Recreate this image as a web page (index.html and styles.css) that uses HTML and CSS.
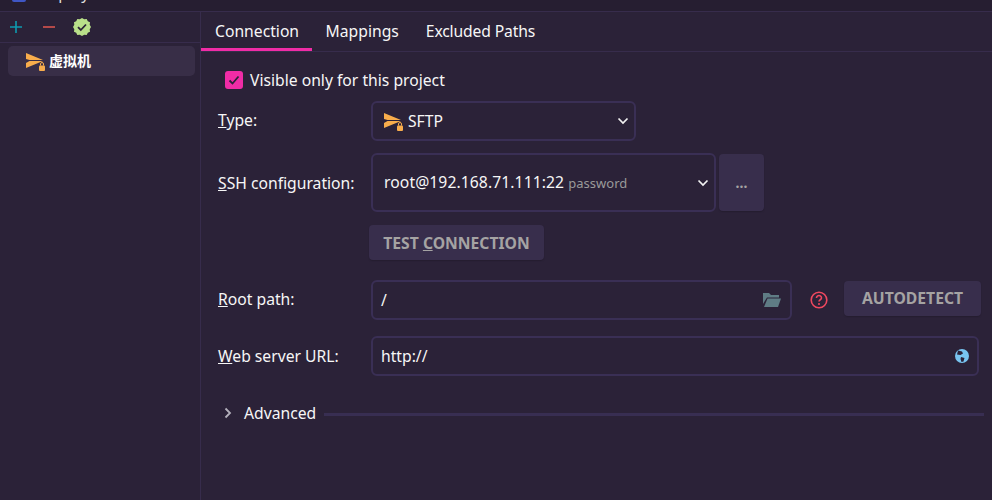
FILE: index.html
```html
<!DOCTYPE html>
<html lang="en">
<head>
<meta charset="utf-8">
<title>Deployment</title>
<link rel="stylesheet" href="styles.css">
</head>
<body>
<header class="titlebar">
  <span class="app-logo"></span>
  <span class="app-title">Deployment</span>
</header>
<div class="main">
  <aside class="sidebar">
    <div class="toolbar">
      <svg class="tool" width="16" height="16" viewBox="0 0 16 16"><path d="M8 2v12M2 8h12" stroke="#0e9bb0" stroke-width="1.6"/></svg>
      <svg class="tool" width="16" height="16" viewBox="0 0 16 16"><path d="M2 8h12" stroke="#d9534f" stroke-width="1.6"/></svg>
      <svg class="tool" width="18" height="18" viewBox="0 0 18 18"><path d="M9 0l2.200 1.300 2.500-.3 1.100 2.200 2.200 1.100-.3 2.500L18 9l-1.300 2.200.3 2.500-2.200 1.100-1.100 2.200-2.500-.3L9 18l-2.200-1.300-2.500.3-1.100-2.200-2.200-1.100.3-2.500L0 9l1.300-2.200L1 4.300l2.200-1.100L4.300 1l2.500.3z" fill="#b9e08a"/><path d="M5 9.200l2.800 2.800L13 6.500" fill="none" stroke="#2b2238" stroke-width="1.800"/></svg>
    </div>
    <div class="tree">
      <div class="tree-item">
        <svg width="20" height="19" viewBox="0 -1 20 19"><path d="M0 0L17 7H3.500L0 6zM3.500 8H17L0 15V10z" fill="#f8ad4c"/><rect x="13" y="12.500" width="6" height="5.500" rx="1" fill="#f8ad4c"/><path d="M14.500 12.500V11a1.500 1.500 0 013 0v1.500" fill="none" stroke="#f8ad4c"/></svg>
        <span class="tree-label">虚拟机</span>
      </div>
    </div>
  </aside>
  <section class="content">
    <nav class="tabs">
      <span class="tab active">Connection</span>
      <span class="tab">Mappings</span>
      <span class="tab">Excluded Paths</span>
    </nav>
    <div class="form">
      <label class="visible">
        <span class="check"><svg width="14" height="14" viewBox="0 0 14 14"><path d="M2.500 7.500l3 3 6-7" fill="none" stroke="#2b2238" stroke-width="1.800"/></svg></span>
        Visible only for this project
      </label>
      <div class="row row-type">
        <span class="label"><u>T</u>ype:</span>
        <div class="field select type-select">
          <svg width="20" height="19" viewBox="0 -1 20 19"><path d="M0 0L17 7H3.500L0 6zM3.500 8H17L0 15V10z" fill="#f8ad4c"/><rect x="13" y="12.500" width="6" height="5.500" rx="1" fill="#f8ad4c"/><path d="M14.500 12.500V11a1.500 1.500 0 013 0v1.500" fill="none" stroke="#f8ad4c"/></svg>
          <span class="grow">SFTP</span>
          <svg class="chev" width="12" height="8" viewBox="0 0 12 8"><path d="M1.500 1.500L6 6l4.500-4.500" fill="none" stroke="#f2f2f2" stroke-width="1.700"/></svg>
        </div>
      </div>
      <div class="row row-ssh">
        <span class="label"><u>S</u>SH configuration:</span>
        <div class="field select ssh-select">
          <span class="grow ssh-text">root@192.168.71.111:22 <small class="hint">password</small></span>
          <svg class="chev" width="12" height="8" viewBox="0 0 12 8"><path d="M1.500 1.500L6 6l4.500-4.500" fill="none" stroke="#f2f2f2" stroke-width="1.700"/></svg>
        </div>
        <button class="btn more">...</button>
      </div>
      <div class="row row-test">
        <span class="label"></span>
        <button class="btn test">TEST <u>C</u>ONNECTION</button>
      </div>
      <div class="row row-root">
        <span class="label"><u>R</u>oot path:</span>
        <div class="field input root-input">
          <span class="grow">/</span>
          <svg width="18" height="16" viewBox="0 0 18 16"><path d="M0 1h6l2 2h8v2.500H4L0 12z" fill="#5f7c85"/><path d="M4.500 6.500H18L15 15H1z" fill="#5f7c85"/></svg>
        </div>
        <svg class="help" width="18" height="18" viewBox="0 0 18 18"><circle cx="9" cy="9" r="7.800" fill="none" stroke="#f0485f" stroke-width="1.600"/><path d="M6.500 7a2.500 2.500 0 115 0c0 1.700-2.500 1.800-2.500 3.500" fill="none" stroke="#f0485f" stroke-width="1.600"/><circle cx="9" cy="13" r="1" fill="#f0485f"/></svg>
        <button class="btn auto">AUTODETECT</button>
      </div>
      <div class="row row-web">
        <span class="label"><u>W</u>eb server URL:</span>
        <div class="field input web-input">
          <span class="grow">http://</span>
          <svg width="14" height="14" viewBox="0 0 14 14"><circle cx="7" cy="7" r="7" fill="#78c4f0"/><path d="M3 1.500l4 1 1 2-2.500 1.500-3.500-.5zM6 8l3.500 1-1 3.500-2 .5-1-3z" fill="#2b2238"/></svg>
        </div>
      </div>
      <div class="advanced">
        <svg width="8" height="12" viewBox="0 0 8 12"><path d="M1.500 1.500L6 6l-4.500 4.500" fill="none" stroke="#b4b1bc" stroke-width="1.800"/></svg>
        <span>Advanced</span>
        <span class="rule"></span>
      </div>
    </div>
  </section>
</div>
</body>
</html>
```

FILE: styles.css
```css
* { box-sizing: border-box; }
html, body { margin: 0; height: 100%; }
body {
  width: 992px;
  height: 500px;
  overflow: hidden;
  background: #2b2238;
  color: #f6f6f6;
  font: 15.7px/20px "Noto Sans", "Noto Sans CJK SC", sans-serif;
  display: flex;
  flex-direction: column;
}
.titlebar {
  height: 12px;
  flex: none;
  background: #261e31;
  border-bottom: 1px solid #372c4c;
  display: flex;
  overflow: hidden;
  padding-left: 12px;
  gap: 12px;
}
.app-logo { width: 14px; height: 2px; background: #3f56c4; border-radius: 0 0 3px 3px; }
.app-title { margin-top: -17px; color: #dedede; }
.main { flex: 1; display: flex; min-height: 0; }
.sidebar { width: 201px; flex: none; border-right: 1px solid #372c4c; }
.toolbar {
  height: 31px;
  display: flex;
  align-items: center;
  padding-left: 8px;
  gap: 17px;
  border-bottom: 1px solid #372c4c;
}
.tool:last-child { margin-left: -1px; }
.tree { padding: 3px 5px 0 8px; }
.tree-item {
  height: 30px;
  background: #382e47;
  border-radius: 5px;
  display: flex;
  align-items: center;
  padding-left: 18px;
  gap: 3px;
}
.tree-label { font-weight: 700; font-size: 14px; color: #fff; }
.content { flex: 1; min-width: 0; }
.tabs {
  height: 40px;
  display: flex;
  border-bottom: 1px solid #372c4c;
}
.tab { padding: 9px 13.500px 0; height: 39px; }
.tab:last-child { letter-spacing: -.15px; }
.tab.active { border-bottom: 3px solid #f02ca6; padding-left: 14px; padding-right: 13px; }
.form { padding: 0 10px 0 17px; }
.visible { display: flex; align-items: center; gap: 7px; height: 22px; margin-top: 17px; margin-left: 7px; }
.check {
  width: 18px; height: 18px; border-radius: 3px; background: #f02ca6;
  display: flex; align-items: center; justify-content: center;
}
.row { display: flex; align-items: center; }
.label { width: 153px; flex: none; }
.row-type .label { margin-top: -2px; }
.row-root .label { margin-top: -2px; }
.field {
  display: flex;
  align-items: center;
  border: 2px solid #3a2f55;
  border-radius: 6px;
  background: #2b2238;
}
.grow { flex: 1; }
.select { padding: 0 5px 0 11px; }
.row-type { margin-top: 10px; }
.type-select { width: 265px; height: 40px; gap: 4px; }
.row-ssh { margin-top: 12px; }
.ssh-select { width: 345px; height: 59px; }
.ssh-text { letter-spacing: .08px; }
.hint { font-size: 13px; color: #9a9a9a; letter-spacing: 0; }
.btn {
  border: 0;
  background: #382e4c;
  border-radius: 4px;
  color: #a5a3a3;
  font: 700 15.7px/20px "Noto Sans", sans-serif;
  padding: 0;
  box-shadow: 0 1px 1px #251d30;
}
.more { width: 45px; height: 57px; margin-left: 3px; font-size: 14px; }
.row-test { margin-top: 13px; }
.test { width: 175px; height: 35px; margin-left: -2px; }
.row-root { margin-top: 20px; }
.input { padding: 0 8px; height: 40px; }
.root-input { width: 421px; padding-right: 9px; }
.help { margin-left: 18px; }
.auto { width: 137px; height: 35px; margin-left: 16px; margin-top: -4px; }
.row-web { margin-top: 16px; }
.web-input { width: 608px; }
.advanced { display: flex; align-items: center; margin-top: 27px; margin-left: 6px; margin-right: -2px; }
.advanced span:first-of-type { margin-left: 12px; }
.rule { flex: 1; height: 3px; background: #382e52; margin: 2px 0 0 8px; }
```
